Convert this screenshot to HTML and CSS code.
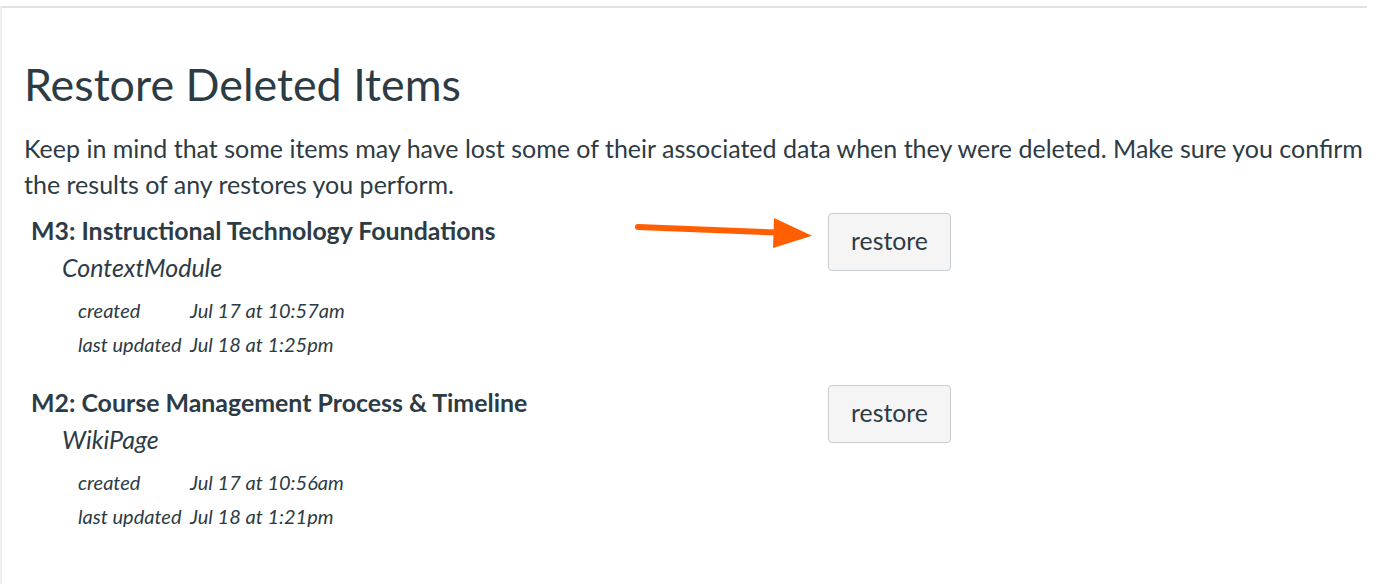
FILE: index.html
```html
<!DOCTYPE html>
<html lang="en">
<head>
<meta charset="utf-8">
<title>Restore Deleted Items</title>
<link rel="stylesheet" href="styles.css">
</head>
<body>
<div class="page">
  <h1 class="title">Restore Deleted Items</h1>
  <p class="intro">Keep in mind that some items may have lost some of their associated data when they were deleted. Make sure you confirm the results of any restores you perform.</p>
  <ul class="items">
    <li class="item">
      <div class="item-info">
        <div class="item-name">M3: Instructional Technology Foundations</div>
        <div class="item-type">ContextModule</div>
        <div class="meta">
          <span class="meta-label">created</span><span class="meta-value">Jul 17 at 10:57am</span>
          <span class="meta-label">last updated</span><span class="meta-value">Jul 18 at 1:25pm</span>
        </div>
      </div>
      <div class="item-action"><button class="btn">restore</button></div>
      <svg class="arrow" width="190" height="40" viewBox="0 0 190 40" aria-hidden="true">
        <line x1="11" y1="13" x2="150" y2="18.5" stroke="#ff5f00" stroke-width="6" stroke-linecap="round"/>
        <polygon points="147,4 185,21.7 146,34" fill="#ff5f00"/>
      </svg>
    </li>
    <li class="item">
      <div class="item-info">
        <div class="item-name">M2: Course Management Process &amp; Timeline</div>
        <div class="item-type">WikiPage</div>
        <div class="meta">
          <span class="meta-label">created</span><span class="meta-value">Jul 17 at 10:56am</span>
          <span class="meta-label">last updated</span><span class="meta-value">Jul 18 at 1:21pm</span>
        </div>
      </div>
      <div class="item-action"><button class="btn">restore</button></div>
    </li>
  </ul>
</div>
</body>
</html>
```
FILE: styles.css
```css
html, body {
  margin: 0;
  padding: 0;
  background: #ffffff;
}
body {
  font-family: Lato, "Open Sans", sans-serif;
  color: #2d3b45;
}
.page {
  margin-top: 6px;
  width: 1367px;
  height: 578px;
  box-sizing: border-box;
  border-top: 2px solid #dde3e8;
  border-left: 2px solid #f0f0f0;
  padding: 0 0 0 22px;
}
.title {
  margin: 0;
  padding-top: 50px;
  font-size: 44.8px;
  font-weight: 400;
  line-height: 52px;
}
.intro {
  margin: 20px 0 0 0;
  font-size: 25px;
  line-height: 36px;
}
.items {
  list-style: none;
  margin: 0;
  padding: 0 0 0 7px;
}
.item {
  position: relative;
  display: flex;
  align-items: flex-start;
  padding-top: 12px;
  padding-bottom: 13px;
}
.item-info {
  width: 797px;
}
.item-name {
  font-size: 24.9px;
  font-weight: 700;
  line-height: 32px;
}
.item-type {
  margin: 3px 0 0 31px;
  font-size: 25px;
  font-style: italic;
  line-height: 36px;
}
.meta {
  margin: 8px 0 0 47px;
  display: grid;
  grid-template-columns: 112px auto;
  font-size: 20px;
  font-style: italic;
  line-height: 34px;
}
.btn {
  margin-top: -1px;
  width: 123px;
  height: 58px;
  box-sizing: border-box;
  border: 1px solid #c7cdd1;
  border-radius: 4px;
  background: #f5f5f5;
  color: #2d3b45;
  font-family: Lato, "Open Sans", sans-serif;
  font-size: 24.8px;
  padding: 0 0 3px 0;
}
.arrow {
  position: absolute;
  left: 596px;
  top: 12px;
}
```
